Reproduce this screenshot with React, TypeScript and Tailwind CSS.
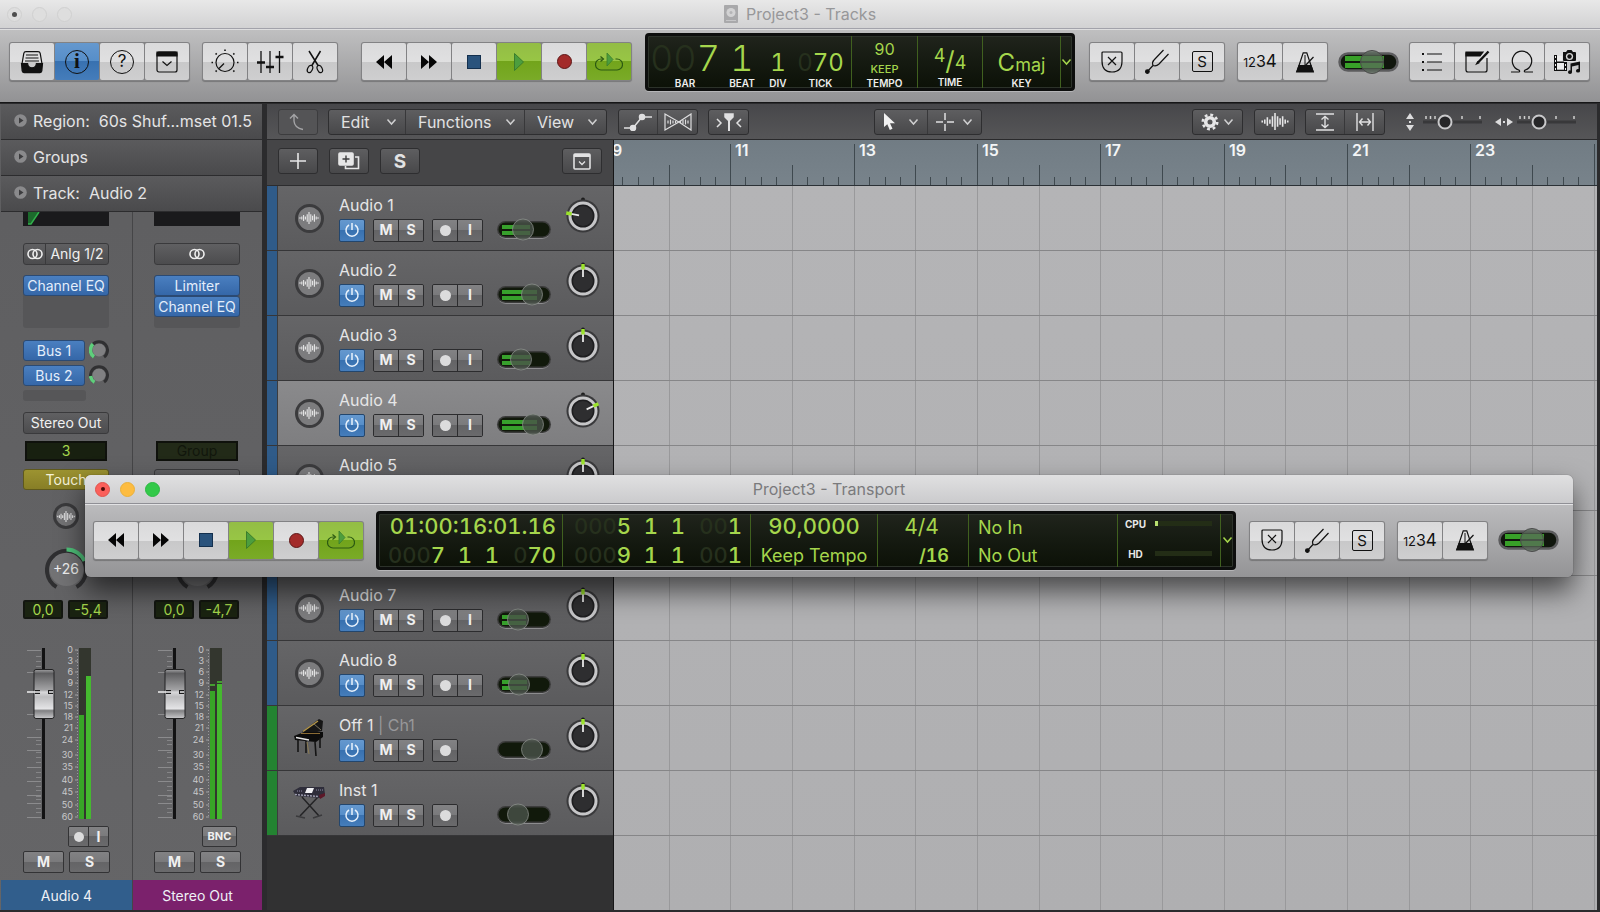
import type { ReactNode } from "react";

/* ---------- shared surface styles ---------- */

const LIGHT =
  "bg-[linear-gradient(to_bottom,#dadadb_0%,#e0e0e1_50%,#c8c8c9_51%,#cfcfd0_100%)]";
const GREEN =
  "bg-[linear-gradient(to_bottom,#93bd45_0%,#98c645_49%,#72a41b_50%,#7aab28_100%)]";
const BLUE =
  "bg-[linear-gradient(to_bottom,#6598ce_0%,#568ec9_49%,#3871b0_50%,#457dbb_100%)]";
const DARK =
  "rounded-[3px] border border-[#2e2e30] bg-[linear-gradient(to_bottom,#5e5e60,#48484a)] text-[#e2e2e3]";
const STRIP_BTN =
  "rounded-[3px] border border-[#3a3a3c] bg-[linear-gradient(to_bottom,#606062,#4c4c4e)] text-[#f0f0f0]";
const PLUGIN =
  "h-[21px] rounded-[3px] border border-[#2b4a73] bg-[linear-gradient(to_bottom,#4a7fc0,#3567a8)] text-[14px] leading-none text-[#e4eefb] whitespace-nowrap";
const TINY =
  "flex items-center justify-center bg-[linear-gradient(to_bottom,#828284_0%,#7a7a7c_49%,#646466_50%,#6a6a6c_100%)] font-bold text-[#f0f0f0] leading-none";

/* ---------- icons ---------- */

type SvgProps = { w: number; h: number; children: ReactNode; sw?: number; color?: string };
function Svg({ w, h, children, sw = 1.2, color = "#111" }: SvgProps) {
  return (
    <svg width={w} height={h} viewBox={`0 0 ${w} ${h}`} fill="none" stroke={color} strokeWidth={sw} aria-hidden="true">
      {children}
    </svg>
  );
}

const InboxIcon = () => (
  <Svg w={24} h={24}>
    <path d="M1.8 15 3.8 3.4Q4.1 1.6 6 1.6H18Q19.9 1.6 20.2 3.4L22.2 15" />
    <path d="M6 5H18M5.5 8H18.5M5 11H19" />
    <path d="M1.5 13.5H7.6C7.9 16.8 9.6 17.8 12 17.8S16.1 16.8 16.4 13.5H22.5L21.8 21Q21.6 22.6 20 22.6H4Q2.4 22.6 2.2 21Z" fill="#111" />
  </Svg>
);
const InfoIcon = () => (
  <span className="flex size-6 items-center justify-center rounded-full border border-[#111] font-['Liberation_Serif',serif] text-[21px] leading-none font-bold text-[#111]">
    i
  </span>
);
const HelpIcon = () => (
  <span className="flex size-6 items-center justify-center rounded-full border border-[#111] text-[17px] leading-none text-[#111]">
    ?
  </span>
);
const TrayIcon = () => (
  <Svg w={22} h={22}>
    <rect x="1" y="1" width="20" height="20" rx="2" />
    <path d="M1 1H21V5H1Z" fill="#111" />
    <path d="M6.5 10.5 11 14.5 15.5 10.5" />
  </Svg>
);
const DialIcon = () => (
  <Svg w={28} h={26}>
    <circle cx="14" cy="13.5" r="9" />
    <path d="M13 14.5 8 19.5" />
    <path
      d="M14 .5V2M4.6 4.4 5.7 5.5M23.4 4.4 22.3 5.5M.5 13.5H2M26 13.5H27.5M4.6 22.6 5.7 21.5M23.4 22.6 22.3 21.5"
      strokeWidth="1.6"
    />
  </Svg>
);
const MixerIcon = () => (
  <Svg w={28} h={24}>
    <path d="M5 1V23M14 1V23M23.5 1V23" strokeWidth="1.3" />
    <path d="M1 12.5H9M10 17H18M19.5 7H27.5" strokeWidth="2.6" />
  </Svg>
);
const ScissorsIcon = () => (
  <Svg w={20} h={24}>
    <path d="M4 1 13.4 16M15.5 1 6.6 16" strokeWidth="1.5" />
    <ellipse cx="5" cy="19" rx="2.4" ry="3.8" transform="rotate(25 5 19)" />
    <ellipse cx="14.8" cy="19" rx="2.4" ry="3.8" transform="rotate(-25 14.8 19)" />
  </Svg>
);
const RewindIcon = () => (
  <Svg w={16} h={16} sw={0}>
    <path d="M8 1V15L0 8ZM16 1V15L8 8Z" fill="#050505" />
  </Svg>
);
const ForwardIcon = () => (
  <Svg w={16} h={16} sw={0}>
    <path d="M0 1V15L8 8ZM8 1V15L16 8Z" fill="#050505" />
  </Svg>
);
const StopIcon = () => <span className="size-[14px] border border-[#14304e] bg-[#2a537c]" />;
const PlayIcon = () => (
  <Svg w={12} h={20} sw={1} color="#3b7d2c">
    <path d="M1.5 1.5V18.5L10.5 10Z" fill="#4c9e3e" />
  </Svg>
);
const RecordIcon = () => <span className="size-[15px] rounded-full border border-[#5e1717] bg-[#a32b2a]" />;
const CycleIcon = () => (
  <Svg w={28} h={20} sw={1.2} color="#2c5a12">
    <path d="M7.5 7H6A5.5 5.5 0 0 0 6 18H22A5.5 5.5 0 0 0 22 7H20.5" />
    <path d="M5.5 4.5 8.5 7 5.5 9.5" />
    <path d="M12 1V14L18 7.5Z" fill="#4c9e3e" stroke="#3b7d2c" strokeWidth=".8" />
  </Svg>
);
const ShieldIcon = () => (
  <Svg w={22} h={22}>
    <path d="M2 1H20Q21 1 21 2V10Q21 21 11 21T1 10V2Q1 1 2 1Z" />
    <path d="M7 6 15 14M15 6 7 14" />
  </Svg>
);
const ForkIcon = () => (
  <Svg w={25} h={25}>
    <path d="M2 23 8 16.5M8 16.5C7 14 7 13 9 11L18.5 1M8 16.5C10.5 17.5 12.5 16.5 14 15L23.5 5" />
    <circle cx="2.4" cy="22.6" r="1.8" fill="#111" />
  </Svg>
);
const SoloIcon = () => (
  <span className="flex size-[21px] items-center justify-center rounded-[2px] border border-[#111] text-[15px] leading-none text-[#111]">
    S
  </span>
);
const CountIcon = () => (
  <span className="flex items-baseline leading-none text-[#111]">
    <span className="text-[12px]">1</span>
    <span className="text-[13px]">2</span>
    <span className="text-[16px]">3</span>
    <span className="text-[17px]">4</span>
  </span>
);
const MetronomeIcon = () => (
  <Svg w={20} h={22}>
    <path d="M2 20.5 8.2 1.8H11.8L18 20.5Z" />
    <path d="M4 14.5H16L18.3 21H1.7Z" fill="#111" />
    <path d="M8 17 18.5 6" />
    <path d="M10 4V14" strokeWidth="1" />
  </Svg>
);
const ListIcon = () => (
  <Svg w={22} h={20}>
    <path d="M6 2H21M6 10H21M6 18H21" />
    <path d="M1 2H3M1 10H3M1 18H3" strokeWidth="2" />
  </Svg>
);
const NoteIcon = () => (
  <Svg w={25} h={23}>
    <path d="M22 8V20Q22 22 20 22H3Q1 22 1 20V3H17" />
    <path d="M1 2H18L15 6H1Z" fill="#111" />
    <path d="M13 12.5 23.5 1.5" strokeWidth="2.4" />
    <path d="M11.5 14 13.5 13 12.5 12Z" fill="#111" />
  </Svg>
);
const LoopIcon = () => (
  <Svg w={24} h={23}>
    <path d="M1 22H9Q10.500 21.500 8.800 20A9.700 9.700 0 1 1 15.200 20Q13.500 21.500 15 22H23" />
  </Svg>
);
const MediaIcon = () => (
  <Svg w={28} h={25} sw={0}>
    <path d="M10 3H13L14.500 1H18.500L20 3H22Q23 3 23 4V11Q23 12 22 12H11Q10 12 10 11V3Z" fill="#111" />
    <circle cx="16.500" cy="7.500" r="3.600" fill="#d8d8d8" />
    <circle cx="16.500" cy="7.500" r="2.200" fill="#111" />
    <path d="M1 6H4V22H1ZM11 13H14V22H11ZM4 12.500H11V14H4ZM4 20.500H11V22H4Z" fill="#111" />
    <path d="M4 14H11V20.500H4ZM4 7H9V12H4Z" fill="#ececec" />
    <path d="M2 7H3V9H2ZM2 11H3V13H2ZM2 15H3V17H2ZM2 19H3V21H2ZM12 15H13V17H12ZM12 19H13V21H12Z" fill="#eee" />
    <path d="M17.500 14.500 27 12.500V21.500A2 1.800 0 1 1 25.500 20V16L19 17.400V23A2 1.800 0 1 1 17.500 21.400Z" fill="#111" />
  </Svg>
);
const Chevron = ({ color = "#cfcfd0" }: { color?: string }) => (
  <Svg w={11} h={8} sw={1.5} color={color}>
    <path d="M1.500 1.500 5.500 6 9.500 1.500" />
  </Svg>
);
const Wave = ({ w = 20 }: { w?: number }) => (
  <svg width={w} height={Math.round(w * 0.6)} viewBox="0 0 26 16" stroke="#e6e6e7" strokeWidth="1.500" aria-hidden="true">
    <path d="M1 7V9M3.400 6V10M5.800 4V12M8.200 6V10M10.600 3V13M13 0V16M15.400 3V13M17.800 5V11M20.200 3V13M22.600 6V10M25 7V9" />
  </svg>
);
const StereoIcon = () => (
  <Svg w={16} h={12} sw={1.6} color="#eee">
    <circle cx="5.500" cy="6" r="4.500" />
    <circle cx="10.500" cy="6" r="4.500" />
  </Svg>
);
const PowerIcon = () => (
  <Svg w={16} h={16} sw={1.5} color="#e9f2fc">
    <path d="M5 3A6 6 0 1 0 11 3M8 1V8" />
  </Svg>
);
const TrayLight = () => (
  <Svg w={18} h={17} sw={1.6} color="#e2e2e3">
    <rect x="1" y="1" width="16" height="15" rx="1" />
    <path d="M1 2.500H17" strokeWidth="3" />
    <path d="M6 8.500 9 11.500 12 8.500" strokeWidth="1.300" />
  </Svg>
);

/* ---------- controls ---------- */

function Group({ children }: { children: ReactNode }) {
  return (
    <div className="flex gap-px rounded-[3px] bg-[#828284] p-px shadow-[0_1px_1px_rgba(0,0,0,0.25)]">{children}</div>
  );
}

function Tool({ label, children, tone = LIGHT }: { label: string; children: ReactNode; tone?: string }) {
  return (
    <button aria-label={label} className={`flex h-[37px] w-11 items-center justify-center rounded-[2px] ${tone}`}>
      {children}
    </button>
  );
}

function TransportButtons() {
  return (
    <Group>
      <Tool label="Rewind"><RewindIcon /></Tool>
      <Tool label="Forward"><ForwardIcon /></Tool>
      <Tool label="Stop"><StopIcon /></Tool>
      <Tool label="Play" tone={GREEN}><PlayIcon /></Tool>
      <Tool label="Record"><RecordIcon /></Tool>
      <Tool label="Cycle" tone={GREEN}><CycleIcon /></Tool>
    </Group>
  );
}

function ModeButtons() {
  return (
    <>
      <Group>
        <Tool label="Replace"><ShieldIcon /></Tool>
        <Tool label="Tuner"><ForkIcon /></Tool>
        <Tool label="Solo"><SoloIcon /></Tool>
      </Group>
      <div className="ml-3">
        <Group>
          <Tool label="Count in"><CountIcon /></Tool>
          <Tool label="Metronome"><MetronomeIcon /></Tool>
        </Group>
      </div>
      <div className="ml-[10px]"><MasterVolume /></div>
    </>
  );
}

function MasterVolume() {
  return (
    <div className="relative flex h-6 w-[61px] items-center">
      <svg width="61" height="24" viewBox="0 0 61 24" aria-hidden="true">
        <rect x="1.500" y="3.500" width="58" height="17" rx="8.500" fill="#10160d" stroke="#5c5c5e" strokeWidth="2.500" />
        <rect x="7" y="6" width="39" height="5" fill="#38a028" />
        <rect x="7" y="13" width="39" height="5" fill="#38a028" />
        <circle cx="34" cy="12" r="11.500" fill="#5a6a5a" fillOpacity=".72" stroke="#4a4a4a" />
      </svg>
      <input type="range" aria-label="Master volume" className="absolute inset-0 w-full opacity-0" />
    </div>
  );
}

function TrackVolume({ name, knob, level }: { name: string; knob: number; level: number }) {
  return (
    <div className="relative h-6 w-[56px]">
      <svg width="56" height="24" viewBox="0 0 56 24" aria-hidden="true">
        <rect x="1.500" y="4" width="53" height="17" rx="8.500" fill="#8c8c8e" />
        <rect x="1" y="3" width="54" height="17" rx="8.500" fill="#3c3c3c" />
        <rect x="2.500" y="4.500" width="51" height="14" rx="7" fill="#11190b" />
        {level > 0 && <path d={`M6 7H${level}V11H6ZM6 13H${level}V17H6Z`} fill="#37a02c" />}
        <circle cx={knob} cy="11.500" r="10.500" fill="#4a534a" fillOpacity=".8" stroke="#8b8f8b" strokeOpacity=".8" />
      </svg>
      <input type="range" aria-label={`${name} volume`} className="absolute inset-0 w-full opacity-0" />
    </div>
  );
}

function PanKnob({ name, angle }: { name: string; angle: number }) {
  return (
    <div className="relative size-9">
      <svg width="36" height="36" viewBox="0 0 36 36" aria-hidden="true">
        <circle cx="18" cy="2.500" r="2" fill="#1c1c1c" />
        <circle cx="18" cy="19" r="16.500" fill="#39393b" />
        <circle cx="18" cy="19" r="13" fill="#1d1d1f" stroke="#c6c6c8" strokeWidth="3" />
        <circle cx="18" cy="19" r="10" fill="#2e2e30" />
        <g transform={`rotate(${angle} 18 19)`}>
          <path d="M18 7V15" stroke="#e8e8e8" strokeWidth="1.800" />
          <path d="M18 2V7.500" stroke="#9be32b" strokeWidth="3.400" />
        </g>
      </svg>
      <input type="range" aria-label={`${name} pan`} className="absolute inset-0 w-full opacity-0" />
    </div>
  );
}

function ZoomSlider({ label }: { label: string }) {
  return (
    <div className="relative h-4 w-[60px]">
      <svg width="60" height="16" viewBox="0 0 60 16" aria-hidden="true">
        <path d="M0 8H59" stroke="#38383a" strokeWidth="3" />
        <path d="M3 2V5M7.500 2V5M12 2V5M39 2V5M57 2V5" stroke="#d0d0d0" strokeWidth="1.500" />
        <circle cx="22" cy="8" r="6.500" fill="#262628" stroke="#c9c9cb" strokeWidth="2" />
      </svg>
      <input type="range" aria-label={label} className="absolute inset-0 w-full opacity-0" />
    </div>
  );
}

/* ---------- LCD displays ---------- */

const LCD =
  "flex rounded-[4px] border-[3px] border-[#0d0e0d] bg-[linear-gradient(to_bottom,#20241c_0%,#161b12_45%,#0c1107_100%)] text-[#a5d64c] shadow-[inset_0_0_0_1px_#2c322a,0_1px_0_#b5b5b7]";
const CELL = "border-l border-[#40601f]";
const GHOST = "text-[#26301d]";

function MainLcd() {
  const label = "text-[10px] leading-3 font-semibold text-[#eeeeee]";
  return (
    <div className={`${LCD} h-[58px] w-[430px] tabular-nums`}>
      <div className="flex flex-1 pt-px pl-1">
        <div className="flex w-[66px] flex-col items-center">
          <span className="h-[40px] text-[36px] leading-[43px] font-light">
            <span className={GHOST}>00</span>
            <span>7</span>
          </span>
          <span className={label}>BAR</span>
        </div>
        <div className="flex w-12 flex-col items-center">
          <span className="h-[40px] text-[36px] leading-[43px] font-light">1</span>
          <span className={label}>BEAT</span>
        </div>
        <div className="flex w-6 flex-col items-center">
          <span className="h-[40px] text-[24px] leading-[52px]">1</span>
          <span className={label}>DIV</span>
        </div>
        <div className="flex flex-1 flex-col items-center">
          <span className="h-[40px] text-[24px] leading-[52px]">
            <span className={GHOST}>0</span>
            <span>70</span>
          </span>
          <span className={label}>TICK</span>
        </div>
      </div>
      <div className={`${CELL} flex w-[66px] flex-col items-center pt-px`}>
        <span className="mt-[3px] h-[19px] text-[16px] leading-[19px]">90</span>
        <span className="h-[18px] text-[11px] leading-[20px] font-medium">KEEP</span>
        <span className={label}>TEMPO</span>
      </div>
      <div className={`${CELL} flex w-[65px] flex-col items-center pt-px`}>
        <span className="flex h-[40px] items-center pt-2 text-[18px] leading-none">
          <span className="pb-[9px]">4</span>
          <span className="text-[26px]">/</span>
          <span className="pt-[5px]">4</span>
        </span>
        <span className={label}>TIME</span>
      </div>
      <div className={`${CELL} flex w-[78px] flex-col items-center pt-px`}>
        <span className="h-[40px] text-[24px] leading-[52px]">
          C<span className="text-[18px]">maj</span>
        </span>
        <span className={label}>KEY</span>
      </div>
      <button aria-label="Display mode" className={`${CELL} flex w-3 items-center justify-center`}>
        <Chevron color="#a5d64c" />
      </button>
    </div>
  );
}

type Position = { ghost: string; bar: string; beat: string; div: string; tickGhost: string; tick: string };
function PositionRow({ p }: { p: Position }) {
  return (
    <div className="grid grid-cols-[61px_27px_27px_57px] justify-end text-right text-[22px] leading-[25px] font-medium">
      <span>
        <span className={GHOST}>{p.ghost}</span>
        <span>{p.bar}</span>
      </span>
      <span>{p.beat}</span>
      <span>{p.div}</span>
      <span>
        <span className={GHOST}>{p.tickGhost}</span>
        <span>{p.tick}</span>
      </span>
    </div>
  );
}

function Meter({ label, load }: { label: string; load: boolean }) {
  return (
    <div className="flex h-5 items-center">
      <span className="w-[31px] text-center text-[10px] leading-none font-bold text-[#e8e8e8]">{label}</span>
      <span className="ml-1 flex h-[5px] w-[57px] bg-[#232d16]">{load && <span className="w-[3px] bg-[#b9e070]" />}</span>
    </div>
  );
}

function TransportLcd() {
  return (
    <div className={`${LCD} h-[59px] min-w-0 flex-1 tabular-nums`}>
      <div className="flex w-[183px] flex-col gap-1 pr-[6px]">
        <div className="text-right text-[22px] leading-[25px] font-medium whitespace-nowrap">01:00:16:01.16</div>
        <PositionRow p={{ ghost: "000", bar: "7", beat: "1", div: "1", tickGhost: "0", tick: "70" }} />
      </div>
      <div className={`${CELL} flex w-[188px] flex-col gap-1 pr-2`}>
        <PositionRow p={{ ghost: "000", bar: "5", beat: "1", div: "1", tickGhost: "00", tick: "1" }} />
        <PositionRow p={{ ghost: "000", bar: "9", beat: "1", div: "1", tickGhost: "00", tick: "1" }} />
      </div>
      <div className={`${CELL} flex w-[127px] flex-col gap-1 text-center`}>
        <div className="text-[22px] leading-[25px] font-medium">90,0000</div>
        <div className="text-[18px] leading-[25px]">Keep Tempo</div>
      </div>
      <div className={`${CELL} flex w-[91px] flex-col gap-1`}>
        <div className="pr-[29px] text-right text-[21px] leading-[25px]">4/4</div>
        <div className="pr-[19px] text-right text-[18px] leading-[25px] font-semibold">/16</div>
      </div>
      <div className={`${CELL} w-[149px] pl-[9px] text-[18px]`}>
        <div className="leading-[28px]">No In</div>
        <div className="leading-[27px]">No Out</div>
      </div>
      <div className={`${CELL} flex flex-1 flex-col gap-[10px] pl-[2px]`}>
        <Meter label="CPU" load />
        <Meter label="HD" load={false} />
      </div>
      <button aria-label="Transport display mode" className={`${CELL} flex w-[13px] items-center justify-center`}>
        <Chevron color="#a5d64c" />
      </button>
    </div>
  );
}

/* ---------- inspector ---------- */

function Disclosure({ children }: { children: ReactNode }) {
  return (
    <button className="flex h-9 w-full items-center border-b border-[#2c2c2e] bg-[linear-gradient(to_bottom,#5b5b5d,#4a4a4c)] pb-[2px] pl-[13px] text-left text-[16px] leading-5 whitespace-pre text-[#e4e4e5]">
      <svg width="13" height="13" viewBox="0 0 13 13" className="mr-[6px]" aria-hidden="true">
        <circle cx="6.500" cy="6.500" r="6.300" fill="#8a8a8c" />
        <path d="M5 3.500V9.500L9.500 6.500Z" fill="#3c3c3e" />
      </svg>
      {children}
    </button>
  );
}

const SCALE: [string, number][] = [
  ["0", 2], ["3", 13], ["6", 24], ["9", 35], ["12", 47], ["15", 58], ["18", 69], ["21", 80],
  ["24", 92], ["30", 107], ["35", 119], ["40", 132], ["45", 144], ["50", 157], ["60", 169],
];
const MINOR = [8, 13, 18, 81, 92, 96, 104, 109, 114, 124, 129, 138, 142, 148, 151, 160, 164];
const MAJOR = [2, 24, 66, 89, 102, 119, 133, 147, 155, 169];

function Fader({ name, left, right, peaks }: { name: string; left: number; right: number; peaks?: [number, number] }) {
  return (
    <div className="relative h-[171px] w-[86px]">
      <svg width="86" height="171" viewBox="0 0 86 171" className="overflow-visible" aria-hidden="true">
        {MAJOR.map((y) => (
          <path key={y} d={`M4 ${y}.500H18`} stroke="#8b8b8d" />
        ))}
        {MINOR.map((y) => (
          <path key={y} d={`M13 ${y}.500H18`} stroke="#858587" />
        ))}
        <rect x="19" width="3" height="171" fill="#121213" />
        {SCALE.map(([t, y]) => (
          <g key={t}>
            <text x="50" y={y + 3} textAnchor="end" fontSize="9" fill="#c8c8ca">{t}</text>
            <path d={`M52 ${y}H55`} stroke="#a0a0a2" />
          </g>
        ))}
        <path d="M54.500 2V170" stroke="#9a9a9c" strokeDasharray="1 2" />
        <rect x="56" width="12" height="171" fill="#33362e" />
        <rect x="56" y={left} width="5" height={171 - left} fill="#38a527" />
        <rect x="63" y={right} width="5" height={171 - right} fill="#45b92f" />
        {peaks && <path d={`M56 ${peaks[0]}H61M63 ${peaks[1]}H68`} stroke="#4cc233" strokeWidth="1.500" />}
        <defs>
          <linearGradient id={`cap-${name}`} x1="0" y1="0" x2="0" y2="1">
            <stop offset="0" stopColor="#a0a0a2" />
            <stop offset=".08" stopColor="#5e5e60" />
            <stop offset=".42" stopColor="#a4a4a6" />
            <stop offset=".46" stopColor="#d8d8da" />
            <stop offset=".56" stopColor="#bdbdbf" />
            <stop offset=".8" stopColor="#e4e4e6" />
            <stop offset=".84" stopColor="#808082" />
            <stop offset="1" stopColor="#c9c9cb" />
          </linearGradient>
        </defs>
        <rect x="11" y="21.500" width="20" height="49" rx="2" fill={`url(#cap-${name})`} stroke="#232324" />
        <path d="M12 44H17M25 44H30" stroke="#1b1b1c" strokeWidth="4" />
        <path d="M4 44H17M26 44H30" stroke="#f0f0f0" strokeWidth="1.500" />
      </svg>
      <input type="range" aria-label={`${name} fader`} className="absolute inset-0 h-full w-full opacity-0" />
    </div>
  );
}

function SendKnob({ arc }: { arc: string }) {
  return (
    <svg width="20" height="20" viewBox="0 0 20 20" fill="none" aria-hidden="true">
      <circle cx="10" cy="10" r="6.500" fill="#808082" />
      <path d="M5 17A8.500 8.500 0 1 1 15 17" stroke="#303032" strokeWidth="3" />
      <path d={arc} stroke="#5fcf7c" strokeWidth="3.500" />
    </svg>
  );
}

function Strip({ second = false }: { second?: boolean }) {
  const values = second ? ["0,0", "-4,7"] : ["0,0", "-5,4"];
  const name = second ? "Stereo Out" : "Audio 4";
  return (
    <div className={`flex flex-col ${second ? "flex-1" : "w-[132px] border-r border-[#454547]"}`}>
      <div className={`flex flex-col ${second ? "pl-[21px]" : "pl-[22px]"}`}>
        <div className="h-[14px] w-[86px] bg-[#1a1a1c]">
          {!second && (
            <svg width="20" height="14" viewBox="0 0 20 14" aria-hidden="true">
              <path d="M5 0H16L8 12H5Z" fill="#1c6a2c" />
              <path d="M16 0 8 12H5" stroke="#32b04c" strokeWidth="1.500" fill="none" />
            </svg>
          )}
        </div>
        <div className={`mt-[17px] flex h-[22px] w-[86px] items-center ${STRIP_BTN}`}>
          <button aria-label={`${name} input format`} className={`flex h-full items-center justify-center ${second ? "w-full" : "w-[22px] border-r border-[#3a3a3c]"}`}>
            <StereoIcon />
          </button>
          {!second && <button className="flex-1 text-[14px] leading-none whitespace-nowrap">Anlg 1/2</button>}
        </div>
        <div className="mt-[10px] flex h-[53px] w-[86px] flex-col rounded-[3px] bg-[#565658]">
          {second && <button className={PLUGIN}>Limiter</button>}
          <button className={PLUGIN}>Channel EQ</button>
        </div>
        <div className="mt-3 h-[61px] w-[86px]">
          {!second && (
            <>
              <div className="flex h-[25px] gap-1">
                <button className={`${PLUGIN} w-[62px]`}>Bus 1</button>
                <SendKnob arc="M5 17A8.500 8.500 0 0 1 4 4" />
              </div>
              <div className="flex h-[25px] gap-1">
                <button className={`${PLUGIN} w-[62px]`}>Bus 2</button>
                <SendKnob arc="M5.500 17.300A8.500 8.500 0 0 1 1.500 11" />
              </div>
              <div className="h-[11px] w-[63px] rounded-[3px] bg-[#565658]" />
            </>
          )}
        </div>
        <div className="mt-[9px] h-[22px] w-[86px]">
          {!second && <button className={`${STRIP_BTN} h-full w-full text-[14px] leading-none whitespace-nowrap`}>Stereo Out</button>}
        </div>
        <div className={`mt-[9px] ml-[2px] flex h-5 w-[82px] items-center justify-center border-2 border-[#0f110c] text-[14px] leading-none ${second ? "bg-[#222a18] text-[#11160c]" : "bg-[#182010] text-[#a5d64c]"}`}>
          {second ? "Group" : "3"}
        </div>
        {second ? (
          <button aria-label="Automation mode" className={`mt-2 h-[21px] w-[86px] ${STRIP_BTN}`} />
        ) : (
          <button className="mt-2 h-[21px] w-[86px] rounded-[3px] border border-[#5f591c] bg-[linear-gradient(to_bottom,#9c9331,#877e26)] text-[14px] leading-none text-[#f4f1d8]">
            Touch
          </button>
        )}
        <div className="mt-[13px] flex h-[26px] w-[86px] justify-center">
          <span className="flex size-[26px] items-center justify-center rounded-full border-[3px] border-[#3a3a3c] bg-[#737375]">
            <Wave w={18} />
          </span>
        </div>
        <div className="mt-[18px] flex h-[43px] w-[86px] justify-center">
          <div className="relative grid size-[43px] place-items-center">
            <svg width="43" height="43" viewBox="0 0 43 43" fill="none" className="col-start-1 row-start-1" aria-hidden="true">
              <circle cx="21.500" cy="22" r="17" fill="#737375" />
              <path d="M11.500 40A19.500 19.500 0 1 1 31.500 40" stroke="#2f2f31" strokeWidth="4" />
              {!second && <path d="M21.500 2.500A19.500 19.500 0 0 1 39.500 14" stroke="#4fc27a" strokeWidth="4" />}
            </svg>
            {!second && <span className="col-start-1 row-start-1 text-[14px] leading-none text-[#f0f0f0]">+26</span>}
          </div>
        </div>
        <div className="mt-[10px] flex h-[19px] gap-[5px]">
          {values.map((v) => (
            <span key={v} className="flex w-10 items-center justify-center rounded-[2px] border-2 border-[#131610] bg-[#1a2311] text-[14px] leading-none text-[#a5d64c]">
              {v}
            </span>
          ))}
        </div>
        <div className="mt-[29px]">
          {second ? (
            <Fader name="Output" left={43} right={36} peaks={[37, 34]} />
          ) : (
            <Fader name="Channel" left={67} right={28} />
          )}
        </div>
        <div className="mt-[7px] flex h-[21px] w-[86px] justify-end">
          {second ? (
            <button className={`mr-[3px] w-[35px] rounded-[2px] border border-[#333335] text-[11px] ${TINY}`}>BNC</button>
          ) : (
            <span className="flex w-[41px] divide-x divide-[#333335] overflow-hidden rounded-[2px] border border-[#333335]">
              <button aria-label="Record enable" className={`flex-1 ${TINY}`}><span className="size-[10px] rounded-full bg-[#dcdcdd]" /></button>
              <button className={`flex-1 text-[14px] ${TINY}`}>I</button>
            </span>
          )}
        </div>
        <div className="mt-1 flex h-[22px] gap-[5px]">
          <button className={`w-[41px] rounded-[2px] border border-[#333335] text-[14px] ${TINY}`}>M</button>
          <button className={`w-[41px] rounded-[2px] border border-[#333335] text-[14px] ${TINY}`}>S</button>
        </div>
      </div>
      <div className={`mt-[7px] flex h-[30px] items-center justify-center text-[14px] text-[#eef1f6] ${second ? "bg-[#7b216c]" : "bg-[#315e8c]"}`}>
        {name}
      </div>
    </div>
  );
}

/* ---------- track list ---------- */

type Track = {
  name: string;
  channel?: string;
  kind: "audio" | "piano" | "synth";
  knob: number;
  level: number;
  pan: number;
  selected?: boolean;
};

const TRACKS: Track[] = [
  { name: "Audio 1", kind: "audio", knob: 27, level: 34, pan: -80 },
  { name: "Audio 2", kind: "audio", knob: 36, level: 41, pan: 0 },
  { name: "Audio 3", kind: "audio", knob: 25, level: 34, pan: 0 },
  { name: "Audio 4", kind: "audio", knob: 37, level: 41, pan: 65, selected: true },
  { name: "Audio 5", kind: "audio", knob: 27, level: 34, pan: 0 },
  { name: "Audio 6", kind: "audio", knob: 27, level: 34, pan: 0 },
  { name: "Audio 7", kind: "audio", knob: 22, level: 30, pan: 0 },
  { name: "Audio 8", kind: "audio", knob: 23, level: 31, pan: 0 },
  { name: "Off 1", channel: "Ch1", kind: "piano", knob: 36, level: 0, pan: 0 },
  { name: "Inst 1", kind: "synth", knob: 22, level: 0, pan: 0 },
];

const PianoIcon = () => (
  <svg width="34" height="40" viewBox="0 0 34 40" aria-hidden="true">
    <path d="M10 14 27 1 31 3 30 13 20 15Z" fill="#161616" />
    <path d="M11 13.500 26 3" stroke="#b99a4a" strokeWidth="1.300" />
    <path d="M22 6 29 12" stroke="#77715f" />
    <path d="M2 18 12 14 31 14V19L24 24 3 22Z" fill="#0c0c0c" />
    <path d="M9 15.500H28" stroke="#8a6b34" />
    <path d="M4 19.500 17 22" stroke="#e2e2e2" strokeWidth="1.400" />
    <path d="M6 22V34M14 23V35M23 24 24 38M28 20V30" stroke="#141414" strokeWidth="1.600" />
    <path d="M15 24 17 36" stroke="#8c7c53" />
  </svg>
);
const SynthIcon = () => (
  <svg width="34" height="40" viewBox="0 0 34 40" aria-hidden="true">
    <path d="M10 14 27 33M26 14 8 33" stroke="#242426" strokeWidth="1.500" />
    <path d="M4 33 13 35M21 35 30 32" stroke="#3a3a3c" strokeWidth="1.500" />
    <path d="M1 8 8 4 32 4 33 11 28 15 4 13Z" fill="#2e2d3a" />
    <path d="M3 11.500 26 13.500" stroke="#9d9daf" strokeWidth="1.400" strokeDasharray="2 1" />
    <path d="M15 5H22L20 10H13Z" fill="#f0f0f3" />
    <path d="M5 8H11M24 7H31" stroke="#8d8da5" strokeDasharray="1 1" />
    <path d="M27 12 33 10V13L28 16Z" fill="#5c1828" />
  </svg>
);

function TrackRow({ track }: { track: Track }) {
  const audio = track.kind === "audio";
  return (
    <li
      className={`flex h-[65px] border-b border-[#363638] ${
        track.selected ? "bg-[linear-gradient(to_bottom,#8a8a8c,#7e7e80)]" : "bg-[linear-gradient(to_bottom,#656567,#5b5b5d)]"
      }`}
    >
      <span className={`w-[11px] border-r border-[#3c3c3e] ${audio ? "bg-[#2f5b89]" : "bg-[#238331]"}`} />
      <span className="ml-[17px] flex w-7 items-center justify-center">
        {audio && (
          <span className="flex size-[29px] shrink-0 items-center justify-center rounded-full border-[3px] border-[#3b3b3d] bg-[#7c7c7e]">
            <Wave />
          </span>
        )}
        {track.kind === "piano" && <span className="-mx-1"><PianoIcon /></span>}
        {track.kind === "synth" && <span className="-mx-1"><SynthIcon /></span>}
      </span>
      <div className="ml-4 min-w-0 flex-1">
        <div className="mt-2 text-[16px] leading-[22px] text-[#e6e6e7]">
          {track.name}
          {track.channel && <span className="text-[#98989a]"> | {track.channel}</span>}
        </div>
        <div className="mt-[2px] flex h-6 items-center gap-2">
          <button aria-label={`${track.name} power`} className={`flex h-[23px] w-[26px] items-center justify-center rounded-[2px] border border-[#23466d] ${BLUE}`}>
            <PowerIcon />
          </button>
          <span className="flex h-[23px] w-[51px] divide-x divide-[#2c2c2e] overflow-hidden rounded-[2px] border border-[#2c2c2e] text-[14px]">
            <button className={`flex-1 ${TINY}`}>M</button>
            <button className={`flex-1 ${TINY}`}>S</button>
          </span>
          <span className={`flex h-[23px] divide-x divide-[#2c2c2e] overflow-hidden rounded-[2px] border border-[#2c2c2e] text-[14px] ${audio ? "w-[51px]" : "w-[26px]"}`}>
            <button aria-label={`${track.name} record`} className={`flex-1 ${TINY}`}>
              <span className="size-[11px] rounded-full bg-[#dcdcdd]" />
            </button>
            {audio && <button className={`flex-1 ${TINY}`}>I</button>}
          </span>
          <span className="ml-auto">
            <TrackVolume name={track.name} knob={track.knob} level={track.level} />
          </span>
        </div>
      </div>
      <div className="mt-[11px] mr-3 ml-[13px]">
        <PanKnob name={track.name} angle={track.pan} />
      </div>
    </li>
  );
}

/* ---------- timeline ---------- */

const BAR = 61.66;
const ORIGIN = -7;
const BARS = Array.from({ length: 40 }, (_, i) => 9 + i);
const barX = (bar: number) => Math.round(ORIGIN + (bar - 9) * BAR);

function Ruler() {
  return (
    <div className="relative h-[46px] overflow-hidden border-b border-[#2b3136] bg-[linear-gradient(to_bottom,#717c84,#78838b)]">
      <svg className="absolute inset-0 h-full w-full" stroke="#3f494f" aria-hidden="true">
        {BARS.map((b) => (
          <g key={b}>
            <path d={`M${barX(b)}.500 ${b % 2 ? 4 : 25}V46`} />
            {[1, 2, 3].map((q) => (
              <path key={q} d={`M${Math.round(barX(b) + (q * BAR) / 4)}.500 37V46`} />
            ))}
          </g>
        ))}
      </svg>
      {BARS.filter((b) => b % 2 === 1 && b < 25).map((b) => (
        <span key={b} className="absolute top-0 text-[16px] leading-[20px] font-semibold text-[#f3f5f6]" style={{ left: barX(b) + 5 }}>
          {b}
        </span>
      ))}
    </div>
  );
}

function Arrange() {
  return (
    <div className="relative flex-1 bg-[linear-gradient(to_bottom,#b4b4b6,#afafb1)]">
      <svg className="absolute inset-0 h-full w-full" aria-hidden="true">
        {BARS.map((b) => (
          <path key={b} d={`M${barX(b)}.500 0V1200`} stroke="#99999b" />
        ))}
        {TRACKS.map((t, i) => (
          <rect key={t.name} x="0" y={(i + 1) * 65 - 1} width="100%" height="1" fill="#868688" />
        ))}
      </svg>
    </div>
  );
}

function TracksToolbar() {
  const menus = [
    { label: "Edit", w: "w-[77px]" },
    { label: "Functions", w: "w-[119px]" },
    { label: "View", w: "w-[81px]" },
  ];
  return (
    <div className="flex h-9 items-center border-b border-[#2a2a2c] bg-[linear-gradient(to_bottom,#47474a,#565658)] pr-5 pl-[11px]">
      <div className="flex flex-1 items-center">
        <button aria-label="Up" className="flex h-[26px] w-10 items-center justify-center rounded-[3px] border border-[#3c3c3e] bg-[#545456]">
          <Svg w={18} h={18} sw={1.4} color="#a4a4a6">
            <path d="M5 1.500V8Q5.500 15 14 16.500M1 5.500 5 1.500 9 5.500" />
          </Svg>
        </button>
        <div className={`ml-[10px] flex h-[26px] divide-x divide-[#38383a] ${DARK}`}>
          {menus.map((m) => (
            <button key={m.label} className={`flex items-center justify-between pr-2 pl-3 text-[16px] leading-none ${m.w}`}>
              {m.label}
              <Chevron />
            </button>
          ))}
        </div>
        <div className={`ml-[11px] flex h-[26px] divide-x divide-[#38383a] ${DARK}`}>
          <button aria-label="Automation" className="flex w-[39px] items-center justify-center">
            <Svg w={28} h={18} sw={1.5} color="#e0e0e1">
              <path d="M0 15H9L18 4H28" />
              <circle cx="9" cy="15" r="2.500" fill="#e0e0e1" />
              <circle cx="18" cy="4" r="2.500" fill="#e0e0e1" />
            </Svg>
          </button>
          <button aria-label="Flex" className="flex w-[39px] items-center justify-center">
            <Svg w={28} h={18} sw={1.2} color="#dededf">
              <path d="M1 1Q14 8 27 17V1Q14 10 1 17Z" />
              <path d="M4 7.500V10.500M6.500 6.500V11.500M9 7.500V10.500M11.500 8V10M16.500 8V10M19 7V11M21.500 6.500V11.500M24 7.500V10.500" />
            </Svg>
          </button>
        </div>
        <button aria-label="Catch playhead" className={`ml-[10px] flex h-[26px] w-[41px] items-center justify-center ${DARK}`}>
          <Svg w={26} h={18} sw={1.5} color="#e0e0e1">
            <path d="M1 6 5 10 1 14M25 6 21 10 25 14" />
            <path d="M9 1H17V4L14 7H12L9 4Z" fill="#e0e0e1" />
            <path d="M13 6V18" strokeWidth="2" />
          </Svg>
        </button>
      </div>
      <div className={`flex h-[26px] divide-x divide-[#38383a] ${DARK}`}>
        <button aria-label="Pointer tool" className="flex w-[53px] items-center justify-center gap-3">
          <Svg w={13} h={18} sw={0}>
            <path d="M1 0V14L4.300 11.200 6.800 17 9.500 15.800 7 10.200H12Z" fill="#f2f2f2" />
          </Svg>
          <Chevron />
        </button>
        <button aria-label="Marquee tool" className="flex w-[53px] items-center justify-center gap-2">
          <Svg w={18} h={18} sw={1.5} color="#e0e0e1">
            <path d="M9 0V7M9 11V18M0 9H7M11 9H18" />
          </Svg>
          <Chevron />
        </button>
      </div>
      <div className="flex flex-1 items-center justify-end">
        <button aria-label="Settings" className={`flex h-[26px] w-[51px] items-center justify-center gap-1 ${DARK}`}>
          <Svg w={18} h={18} color="#e6e6e7">
            <circle cx="9" cy="9" r="4.300" strokeWidth="3.600" />
            <circle cx="9" cy="9" r="7.200" strokeWidth="2.600" strokeDasharray="2.83 2.83" />
          </Svg>
          <Chevron />
        </button>
        <button aria-label="Waveform zoom" className={`ml-[11px] flex h-[26px] w-[41px] items-center justify-center ${DARK}`}>
          <Wave w={28} />
        </button>
        <div className={`ml-[10px] flex h-[26px] divide-x divide-[#38383a] ${DARK}`}>
          <button aria-label="Vertical auto zoom" className="flex w-[39px] items-center justify-center">
            <Svg w={18} h={18} sw={1.4} color="#e0e0e1">
              <path d="M0 1H18M0 17H18M9 3.500V14.500M5.500 6.500 9 3.500 12.500 6.500M5.500 11.500 9 14.500 12.500 11.500" />
            </Svg>
          </button>
          <button aria-label="Horizontal auto zoom" className="flex w-[39px] items-center justify-center">
            <Svg w={18} h={18} sw={1.4} color="#e0e0e1">
              <path d="M1 0V18M17 0V18M3.500 9H14.500M6.500 5.500 3.500 9 6.500 12.500M11.500 5.500 14.500 9 11.500 12.500" />
            </Svg>
          </button>
        </div>
        <span className="ml-5">
          <Svg w={10} h={18} sw={0}>
            <path d="M5 0 9 6H1ZM5 18 9 12H1ZM4 8H6V10H4Z" fill="#dcdcdd" />
          </Svg>
        </span>
        <span className="ml-2"><ZoomSlider label="Vertical zoom" /></span>
        <span className="ml-3">
          <Svg w={18} h={10} sw={0}>
            <path d="M0 5 6 1V9ZM18 5 12 1V9ZM8 4H10V6H8Z" fill="#dcdcdd" />
          </Svg>
        </span>
        <span className="ml-1"><ZoomSlider label="Horizontal zoom" /></span>
      </div>
    </div>
  );
}

function ListToolbar() {
  const b = `flex h-[26px] w-10 items-center justify-center ${DARK}`;
  return (
    <div className="flex h-[46px] gap-[11px] border-b border-[#2c2c2e] bg-[#454547] pt-[8px] pr-[11px] pl-[11px]">
      <button aria-label="Add track" className={b}>
        <Svg w={16} h={16} sw={1.6} color="#e6e6e7"><path d="M8 0V16M0 8H16" /></Svg>
      </button>
      <button aria-label="Duplicate track" className={b}>
        <Svg w={22} h={18} sw={1.6} color="#e6e6e7">
          <path d="M17 5H20.500V16.500H7.500V14" />
          <rect x="1" y="1" width="14" height="12" rx="1" fill="#e6e6e7" />
          <path d="M8 3.500V10.500M4.500 7H11.500" stroke="#3c3c3e" strokeWidth="1.400" />
        </Svg>
      </button>
      <button className={`${b} text-[19px] leading-none font-bold`}>S</button>
      <button aria-label="Track header options" className={`${b} ml-auto`}><TrayLight /></button>
    </div>
  );
}

/* ---------- windows ---------- */

function TransportWindow() {
  return (
    <section className="absolute top-[475px] right-[27px] left-[85px] overflow-hidden rounded-[6px] bg-[linear-gradient(to_bottom,#bcbcbe_28px,#949496_100%)] shadow-[0_14px_28px_rgba(0,0,0,0.6),0_0_1px_rgba(0,0,0,0.6)]">
      <header className="flex h-[29px] items-center border-b border-[#8f8f95] bg-[linear-gradient(to_bottom,#e0e0e1,#cbcbcd)] px-[10px]">
        <div className="flex w-20 gap-[10px]">
          <button aria-label="Close" className="flex size-[15px] items-center justify-center rounded-full border border-[#df534c] bg-[#fb605b]">
            <span className="size-1 rounded-full bg-[#4d0c0a]" />
          </button>
          <button aria-label="Minimize" className="size-[15px] rounded-full border border-[#eab03a] bg-[#fdbc40]" />
          <button aria-label="Zoom" className="size-[15px] rounded-full border border-[#2bb941] bg-[#33c949]" />
        </div>
        <h2 className="flex-1 text-center text-[16px] leading-none text-[#7a7a7c]">Project3 - Transport</h2>
        <div className="w-20" />
      </header>
      <div className="flex h-[73px] items-center border-t border-[#e2e2e4] pr-[14px] pb-[2px] pl-2">
        <TransportButtons />
        <div className="ml-3 flex min-w-0 flex-1"><TransportLcd /></div>
        <div className="ml-[13px] flex items-center"><ModeButtons /></div>
      </div>
    </section>
  );
}

export default function App() {
  return (
    <div className="relative flex min-h-screen flex-col overflow-hidden bg-[#2b2b2d] font-['Inter','Liberation_Sans',sans-serif] select-none">
      <header className="flex h-[29px] items-center border-b border-[#a2a2aa] bg-[linear-gradient(to_bottom,#e8e8e8,#d2d2d3)] px-[7px]">
        <div className="flex w-20 gap-[10px]">
          <button aria-label="Close project" className="flex size-[15px] items-center justify-center rounded-full border border-[#d0d0d0] bg-[#dedede]">
            <span className="size-[5px] rounded-full bg-[#4e4e4e]" />
          </button>
          <button aria-label="Minimize project" className="size-[15px] rounded-full border border-[#d0d0d0] bg-[#dedede]" />
          <button aria-label="Zoom project" className="size-[15px] rounded-full border border-[#d0d0d0] bg-[#dedede]" />
        </div>
        <h1 className="flex flex-1 items-center justify-center gap-2 text-[16px] leading-none text-[#979799]">
          <svg width="14" height="18" viewBox="0 0 14 18" aria-hidden="true">
            <rect width="14" height="18" rx="1" fill="#a9a9ab" />
            <circle cx="7" cy="7.500" r="4.500" fill="#d2d2d3" />
            <circle cx="7" cy="7.500" r="1.500" fill="#b4b4b6" />
            <path d="M2 15.500H12" stroke="#c6c6c8" />
          </svg>
          Project3 - Tracks
        </h1>
        <div className="w-20" />
      </header>

      <div className="flex h-[74px] items-start border-t border-b border-t-[#dededf] border-b-[#161617] bg-[linear-gradient(to_bottom,#bfbfc0,#929294)] pt-[12px] pr-[10px] pl-[9px]">
        <Group>
          <Tool label="Library"><InboxIcon /></Tool>
          <Tool label="Inspector" tone={BLUE}><InfoIcon /></Tool>
          <Tool label="Quick Help"><HelpIcon /></Tool>
          <Tool label="Toolbar"><TrayIcon /></Tool>
        </Group>
        <div className="ml-3">
          <Group>
            <Tool label="Smart Controls"><DialIcon /></Tool>
            <Tool label="Mixer"><MixerIcon /></Tool>
            <Tool label="Editors"><ScissorsIcon /></Tool>
          </Group>
        </div>
        <div className="ml-[23px]"><TransportButtons /></div>
        <div className="-mt-[9px] ml-[13px]"><MainLcd /></div>
        <div className="ml-[14px] flex items-center"><ModeButtons /></div>
        <div className="ml-auto">
          <Group>
            <Tool label="List editors"><ListIcon /></Tool>
            <Tool label="Note pad"><NoteIcon /></Tool>
            <Tool label="Loops"><LoopIcon /></Tool>
            <Tool label="Media browser"><MediaIcon /></Tool>
          </Group>
        </div>
      </div>

      <main className="flex flex-1 pt-px pb-[2px]">
        <aside className="flex w-[262px] flex-col bg-[linear-gradient(to_bottom,#5e5e60,#656567)] pl-px">
          <Disclosure>Region:  60s Shuf...mset 01.5</Disclosure>
          <Disclosure>Groups</Disclosure>
          <Disclosure>Track:  Audio 2</Disclosure>
          <div className="flex flex-1">
            <Strip />
            <Strip second />
          </div>
        </aside>
        <section className="mr-[3px] ml-[5px] flex min-w-0 flex-1 flex-col">
          <TracksToolbar />
          <div className="flex flex-1">
            <div className="flex w-[347px] flex-col border-r border-[#161617] bg-[#313132]">
              <ListToolbar />
              <ul>
                {TRACKS.map((t) => (
                  <TrackRow key={t.name} track={t} />
                ))}
              </ul>
            </div>
            <div className="flex min-w-0 flex-1 flex-col">
              <Ruler />
              <Arrange />
            </div>
          </div>
        </section>
      </main>

      <TransportWindow />
    </div>
  );
}
